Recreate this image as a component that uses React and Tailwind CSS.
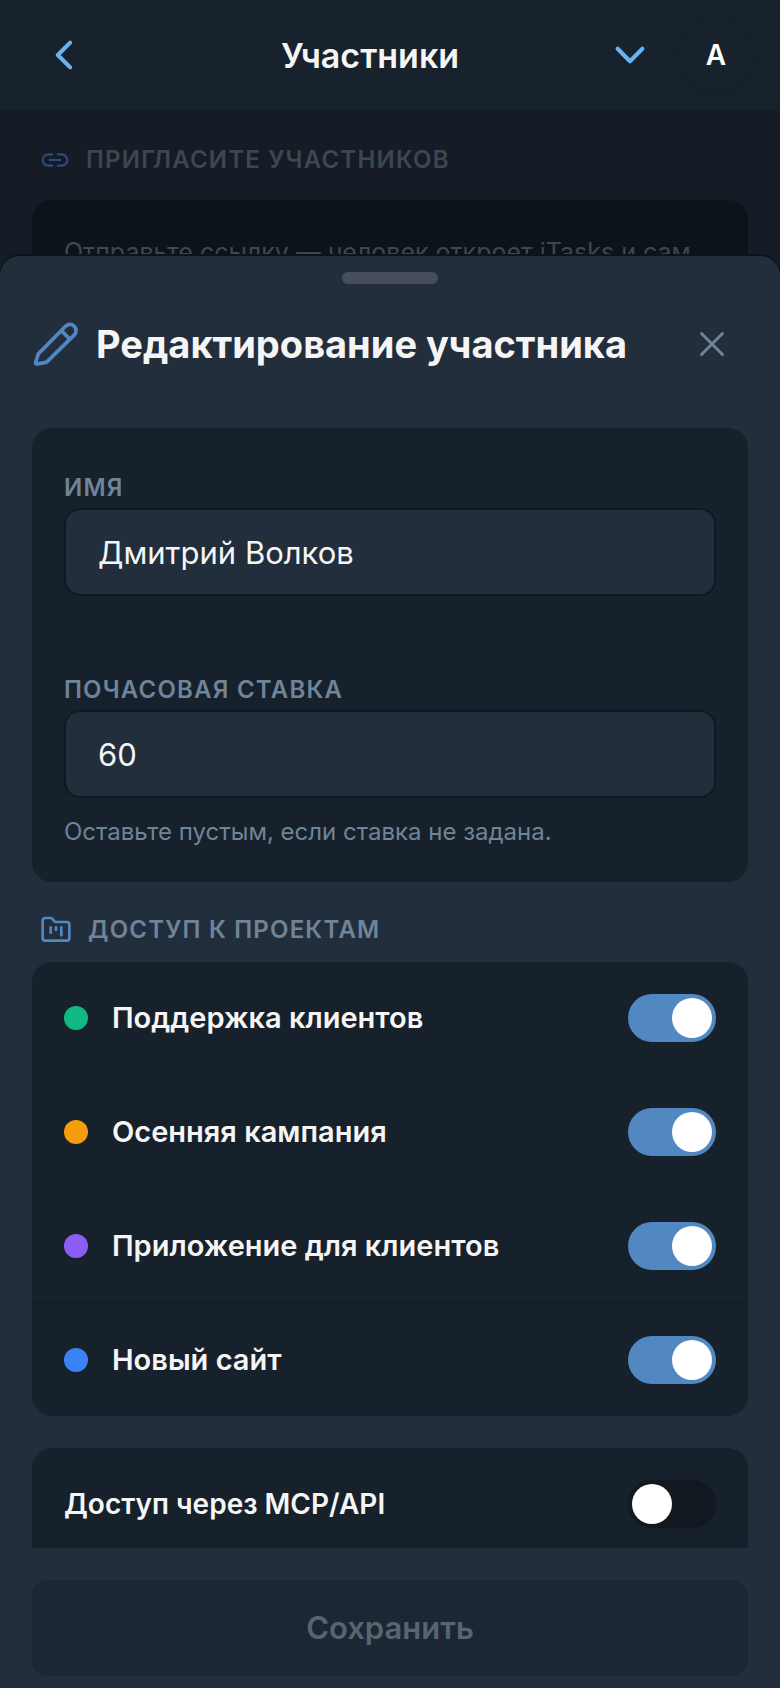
import { useState } from "react";
import { FolderKanban } from "lucide-react";
import {
  IoChevronBackOutline,
  IoChevronDownOutline,
  IoCloseOutline,
  IoLinkOutline,
} from "react-icons/io5";

const PROJECTS = [
  { id: "support", name: "Поддержка клиентов", dot: "bg-[#10b981]" },
  { id: "autumn", name: "Осенняя кампания", dot: "bg-[#f59e0b]" },
  { id: "app", name: "Приложение для клиентов", dot: "bg-[#8b5cf6]" },
  { id: "site", name: "Новый сайт", dot: "bg-[#3b82f6]" },
];

function PencilIcon({ className }) {
  return (
    <svg
      className={className}
      viewBox="8 10 48 48"
      fill="none"
      stroke="currentColor"
      strokeWidth="3.7"
      strokeLinecap="round"
      strokeLinejoin="round"
      aria-hidden="true"
    >
      <path d="M14.8 43.4L41.6 16.2a6.1 6.1 0 0 1 8.7 8.7L23.2 51.6q-.6.6-1.4.8L12.8 54q-1.4.2-1.2-1.2l2.4-8q.2-.8.8-1.4z" />
      <path d="M37.4 20.6l8.2 8.4" />
    </svg>
  );
}

function Toggle({ id, checked, onChange }) {
  return (
    <input
      id={id}
      type="checkbox"
      role="switch"
      checked={checked}
      onChange={onChange}
      className="h-12 w-[88px] shrink-0 cursor-pointer appearance-none rounded-full bg-[#111820] p-1 transition-colors before:block before:size-10 before:rounded-full before:bg-white before:transition-transform checked:bg-[#5288c1] checked:before:translate-x-10"
    />
  );
}

function Field({ id, label, value, onChange, hint }) {
  return (
    <div className="px-8 py-8">
      <label
        htmlFor={id}
        className="block pt-3 pb-1 text-2xl font-semibold tracking-wider text-[#708499] uppercase"
      >
        {label}
      </label>
      <input
        id={id}
        type="text"
        value={value}
        onChange={(e) => onChange(e.target.value)}
        className="block h-[88px] w-full rounded-2xl border-2 border-[#101921] bg-[#232e3c] px-8 text-[31px] text-[#f5f5f5] outline-none"
      />
      {hint && <p className="pt-4 text-2xl leading-9 text-[#708499]">{hint}</p>}
    </div>
  );
}

export default function App() {
  const [name, setName] = useState("Дмитрий Волков");
  const [rate, setRate] = useState("60");
  const [access, setAccess] = useState({ support: true, autumn: true, app: true, site: true });
  const [apiAccess, setApiAccess] = useState(false);

  const toggleProject = (id) => setAccess((prev) => ({ ...prev, [id]: !prev[id] }));

  return (
    <div className="relative h-screen overflow-hidden bg-[#151c25] font-[Inter,'Liberation_Sans',sans-serif] text-[#f5f5f5]">
      <header className="flex h-[110px] items-center bg-[#18222c] pr-6 pl-8">
        <button type="button" aria-label="Назад" className="flex w-[100px] text-[#6ab3f3]">
          <IoChevronBackOutline className="ml-2.5 size-11" />
        </button>
        <h1 className="flex-1 text-center text-[34px] font-semibold">Участники</h1>
        <div className="flex items-center gap-6">
          <button type="button" aria-label="Меню" className="text-[#6ab3f3]">
            <IoChevronDownOutline className="size-11" />
          </button>
          <button
            type="button"
            className="size-20 rounded-full border-2 border-[#17202a] bg-[#18222c] text-[28px] font-semibold text-white"
          >
            A
          </button>
        </div>
      </header>

      <main className="px-8">
        <h2 className="flex items-center gap-4 px-2 pt-[34px] pb-6 text-2xl font-semibold tracking-wider text-[#3d4752] uppercase">
          <IoLinkOutline className="size-[30px] text-[#2c4f77]" />
          Пригласите участников
        </h2>
        <div className="rounded-[20px] bg-[#0d131b] px-8 py-[34px] text-[25px] text-[#40474f]">
          Отправьте ссылку — человек откроет iTasks и сам
        </div>
      </main>

      <section
        role="dialog"
        aria-labelledby="sheet-title"
        className="absolute inset-x-0 top-64 bottom-0 flex flex-col rounded-t-[20px] bg-[#232e3c] shadow-[0_-2px_0_#0d131b]"
      >
        <div className="mx-auto mt-4 h-3 w-24 shrink-0 rounded-full bg-[#464f5b]" />
        <div className="flex items-center gap-4 px-8 pt-8 pb-14">
          <PencilIcon className="size-12 shrink-0 text-[#5288c1]" />
          <h2 id="sheet-title" className="flex-1 text-[38px] leading-14 font-bold">
            Редактирование участника
          </h2>
          <button type="button" aria-label="Закрыть" className="mr-3 text-[#708499]">
            <IoCloseOutline className="size-12" />
          </button>
        </div>

        <div className="min-h-0 flex-1 overflow-y-auto px-8 [scrollbar-width:none]">
          <div className="divide-y-2 divide-[#151e27] rounded-[20px] bg-[#17212b]">
            <Field id="name" label="Имя" value={name} onChange={setName} />
            <Field
              id="rate"
              label="Почасовая ставка"
              value={rate}
              onChange={setRate}
              hint="Оставьте пустым, если ставка не задана."
            />
          </div>

          <h3 className="flex items-center gap-4 px-2 pt-8 pb-4 text-2xl font-semibold tracking-wider text-[#708499] uppercase">
            <FolderKanban className="size-8 text-[#5288c1]" strokeWidth={2} />
            Доступ к проектам
          </h3>
          <ul className="divide-y-2 divide-[#151e27] rounded-[20px] bg-[#17212b]">
            {PROJECTS.map((project) => (
              <li key={project.id} className="flex items-center gap-6 px-8 py-8">
                <span className={`size-6 rounded-full ${project.dot}`} />
                <label htmlFor={project.id} className="flex-1 text-[29px] font-semibold">
                  {project.name}
                </label>
                <Toggle
                  id={project.id}
                  checked={access[project.id]}
                  onChange={() => toggleProject(project.id)}
                />
              </li>
            ))}
          </ul>

          <div className="mt-8 flex items-center rounded-[20px] bg-[#17212b] px-8 pt-8 pb-16">
            <label htmlFor="api" className="flex-1 text-[28px] font-semibold">
              Доступ через MCP/API
            </label>
            <Toggle id="api" checked={apiAccess} onChange={() => setApiAccess(!apiAccess)} />
          </div>
        </div>

        <div className="px-8 pt-8 pb-3">
          <button
            type="button"
            disabled
            className="h-24 w-full rounded-2xl bg-[#1d2733] text-[31px] font-semibold text-[#566473]"
          >
            Сохранить
          </button>
        </div>
      </section>
    </div>
  );
}
